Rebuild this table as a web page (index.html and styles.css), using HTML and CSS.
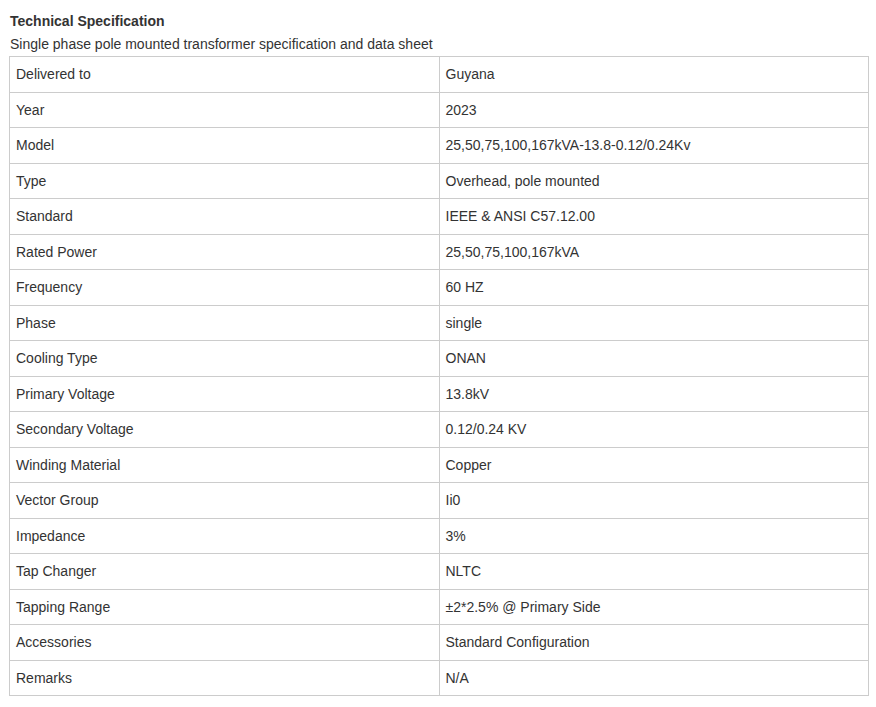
FILE: index.html
```html
<!DOCTYPE html>
<html>
<head>
<meta charset="utf-8">
<link rel="stylesheet" href="styles.css">
</head>
<body>
<div class="spec">
  <h3 class="spec-title">Technical Specification</h3>
  <p class="spec-sub">Single phase pole mounted transformer specification and data sheet</p>
  <table class="spec-table">
    <tr><td>Delivered to</td><td>Guyana</td></tr>
    <tr><td>Year</td><td>2023</td></tr>
    <tr><td>Model</td><td>25,50,75,100,167kVA-13.8-0.12/0.24Kv</td></tr>
    <tr><td>Type</td><td>Overhead, pole mounted</td></tr>
    <tr><td>Standard</td><td>IEEE &amp; ANSI C57.12.00</td></tr>
    <tr><td>Rated Power</td><td>25,50,75,100,167kVA</td></tr>
    <tr><td>Frequency</td><td>60 HZ</td></tr>
    <tr><td>Phase</td><td>single</td></tr>
    <tr><td>Cooling Type</td><td>ONAN</td></tr>
    <tr><td>Primary Voltage</td><td>13.8kV</td></tr>
    <tr><td>Secondary Voltage</td><td>0.12/0.24 KV</td></tr>
    <tr><td>Winding Material</td><td>Copper</td></tr>
    <tr><td>Vector Group</td><td>Ii0</td></tr>
    <tr><td>Impedance</td><td>3%</td></tr>
    <tr><td>Tap Changer</td><td>NLTC</td></tr>
    <tr><td>Tapping Range</td><td>±2*2.5% @ Primary Side</td></tr>
    <tr><td>Accessories</td><td>Standard Configuration</td></tr>
    <tr><td>Remarks</td><td>N/A</td></tr>
  </table>
</div>
</body>
</html>
```
FILE: styles.css
```css
html, body {
  margin: 0;
  padding: 0;
  background: #fff;
}
body {
  font-family: "Liberation Sans", Arial, sans-serif;
  color: #333;
}
.spec {
  padding: 11px 7px 0 9px;
}
.spec-title {
  margin: 0;
  padding-left: 1px;
  font-size: 14px;
  font-weight: bold;
  line-height: 20px;
}
.spec-sub {
  margin: 3px 0 0;
  padding-left: 1px;
  font-size: 14px;
  line-height: 20px;
}
.spec-table {
  width: 860px;
  border-collapse: collapse;
  font-size: 14px;
  margin-top: 2px;
}
.spec-table td {
  border: 1px solid #ccc;
  padding: 7px 6px;
  line-height: 20.5px;
  width: 50%;
  vertical-align: middle;
}
```
